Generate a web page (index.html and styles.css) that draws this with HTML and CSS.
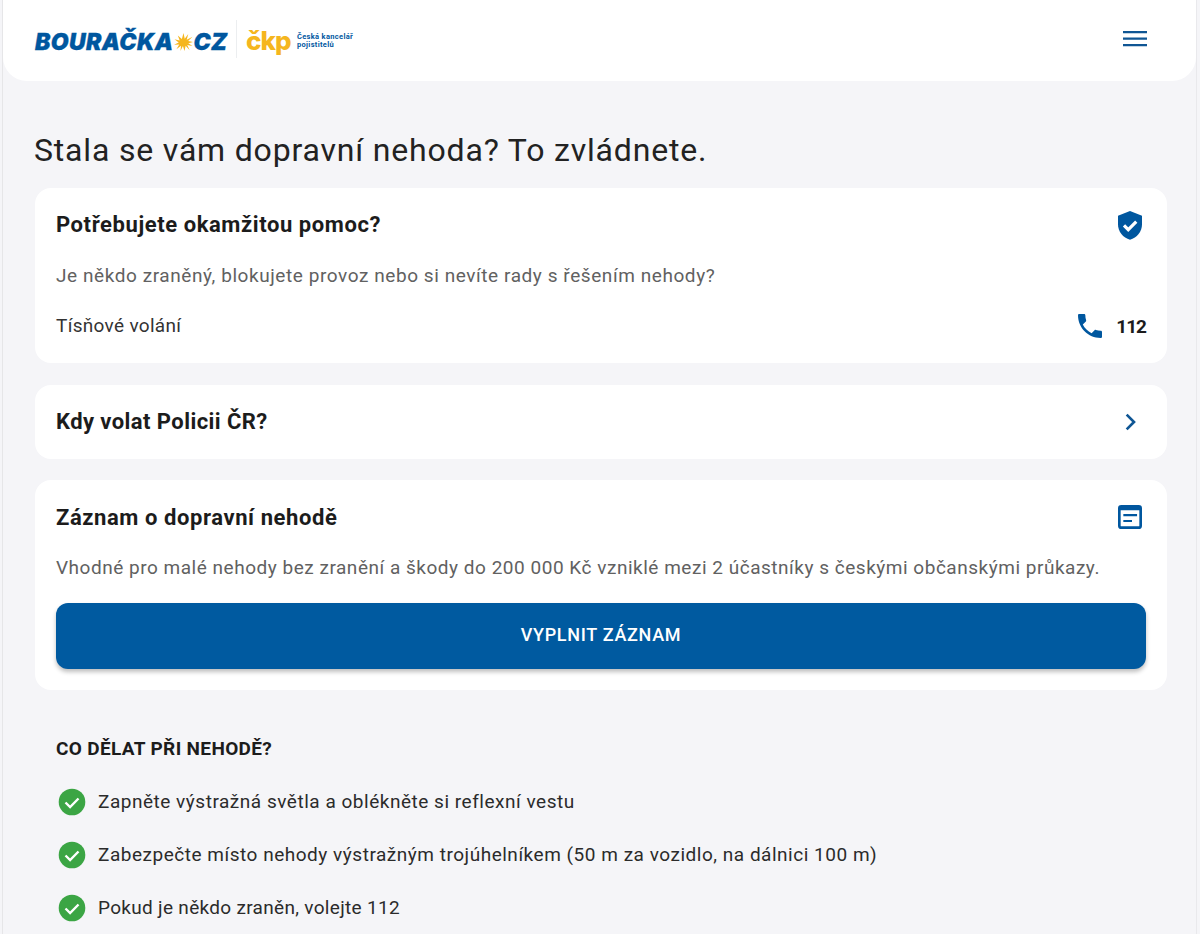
FILE: index.html
```html
<!DOCTYPE html>
<html lang="cs">
<head>
<meta charset="utf-8">
<title>Bouračka.cz</title>
<link rel="stylesheet" href="styles.css">
</head>
<body>
<div class="page">
  <header class="header">
    <div class="logos">
      <div class="logo-main"><span>BOURAČKA</span><svg class="star" viewBox="0 0 20 20"><path fill="#f5b61e" d="M10 0l1.300 6 3.700-5-1.600 6.200L19.500 4l-4.600 4.500 5.100.9-5 1.400 4.500 3-5.600-1.300 2.600 5.600-4.200-4.700L11 19l-1.600-5.300L6.800 19l.6-5.700L2.500 17l3-5L0 12.300l5-2.300L.5 6.500l5.500 1.300L4 2.500l4.300 3.800z"/></svg><span>CZ</span></div>
      <div class="logo-divider"></div>
      <div class="logo-ckp">čkp</div>
      <div class="logo-sub">Česká kancelář<br>pojistitelů</div>
    </div>
    <button class="menu" aria-label="Menu"><svg width="24" height="16" viewBox="0 0 24 16"><path fill="#0f5694" d="M0 0h24v2.200H0zM0 6.500h24v2.200H0zM0 13h24v2.200H0z"/></svg></button>
  </header>
  <main class="main">
    <h1 class="title">Stala se vám dopravní nehoda? To zvládnete.</h1>
    <section class="card card-help">
      <div class="card-head">
        <h2 class="lift">Potřebujete okamžitou pomoc?</h2>
        <svg width="32" height="32" viewBox="0 0 24 24"><path fill="#00579f" d="M12 1.500 3 5v6.500c0 5.400 3.800 10.400 9 11.500 5.200-1.100 9-6.100 9-11.500V5z"/><path fill="none" stroke="#fff" stroke-width="2.400" d="m7.500 12.300 3.200 3.200 6-6"/></svg>
      </div>
      <p class="desc desc-short">Je někdo zraněný, blokujete provoz nebo si nevíte rady s řešením nehody?</p>
      <div class="call-row">
        <span class="call-label">Tísňové volání</span>
        <span class="call-num"><svg width="32" height="32" viewBox="0 0 24 24"><path fill="#00579f" d="M6.600 10.800c1.400 2.800 3.800 5.100 6.600 6.600l2.200-2.200c.3-.3.7-.4 1-.2 1.100.4 2.300.6 3.600.6.600 0 1 .4 1 1V20c0 .6-.4 1-1 1C10.600 21 3 13.400 3 4c0-.6.4-1 1-1h3.500c.6 0 1 .4 1 1 0 1.300.2 2.500.6 3.600.1.300 0 .7-.2 1z"/></svg><b>112</b></span>
      </div>
    </section>
    <section class="card card-police">
      <h2 class="police-title lift">Kdy volat Policii ČR?</h2>
      <svg width="32" height="32" viewBox="0 0 24 24"><path fill="none" stroke="#0f5694" stroke-width="2" d="m9.500 6.500 5.500 5.500-5.500 5.500"/></svg>
    </section>
    <section class="card card-record">
      <div class="card-head">
        <h2>Záznam o dopravní nehodě</h2>
        <svg width="32" height="32" viewBox="0 0 24 24"><rect x="4" y="4" width="16" height="16" rx="1.500" fill="none" stroke="#00579f" stroke-width="2"/><path fill="#00579f" d="M4 4h16v3H4zM7 9.750h10.300v1.600H7zM7 14.200h6.500v1.600H7z"/></svg>
      </div>
      <p class="desc">Vhodné pro malé nehody bez zranění a škody do 200 000 Kč vzniklé mezi 2 účastníky s českými občanskými průkazy.</p>
      <button class="cta">VYPLNIT ZÁZNAM</button>
    </section>
    <section class="todo">
      <h3>CO DĚLAT PŘI NEHODĚ?</h3>
      <ul class="todo-list">
        <li><svg width="32" height="32" viewBox="0 0 32 32"><circle cx="16" cy="16" r="13.300" fill="#3ba544"/><path fill="none" stroke="#fff" stroke-width="2.400" d="m9.500 16.500 4.600 4.500 8.400-8.500"/></svg>Zapněte výstražná světla a oblékněte si reflexní vestu</li>
        <li><svg width="32" height="32" viewBox="0 0 32 32"><circle cx="16" cy="16" r="13.300" fill="#3ba544"/><path fill="none" stroke="#fff" stroke-width="2.400" d="m9.500 16.500 4.600 4.500 8.400-8.500"/></svg>Zabezpečte místo nehody výstražným trojúhelníkem (50 m za vozidlo, na dálnici 100 m)</li>
        <li class="short"><svg width="32" height="32" viewBox="0 0 32 32"><circle cx="16" cy="16" r="13.300" fill="#3ba544"/><path fill="none" stroke="#fff" stroke-width="2.400" d="m9.500 16.500 4.600 4.500 8.400-8.500"/></svg>Pokud je někdo zraněn, volejte 112</li>
      </ul>
    </section>
  </main>
</div>
</body>
</html>
```
FILE: styles.css
```css
* { box-sizing: border-box; }
html, body { margin: 0; height: 100%; overflow: hidden; }
body { background: #f5f5f8; font-family: Roboto, "Liberation Sans", sans-serif; color: #1c1c1c; }
.page { height: 934px; margin: 0 3px 0 2px; border-left: 1px solid #e6e6e8; border-right: 1px solid #e9e9ec; overflow: hidden; }
.header { height: 81px; background: #fff; border-radius: 0 0 24px 24px; display: flex; align-items: center; justify-content: space-between; padding: 0 49px 4px 32px; }
.logos { display: flex; align-items: center; }
.logo-main { display: flex; align-items: center; font-family: Inter, Roboto, sans-serif; font-weight: 900; font-style: italic; font-size: 23px; color: #00579f; letter-spacing: .4px; -webkit-text-stroke: .3px #00579f; width: 191px; margin-top: 7px; }
.star { width: 19px; height: 19px; margin: 0 1px 0 0; flex: none; }
.logo-divider { width: 1px; height: 38px; background: #eceef0; margin: 0 9px 0 10px; }
.logo-ckp { font-family: Inter, Roboto, sans-serif; font-weight: 800; font-size: 26px; line-height: 30px; color: #f5b61e; letter-spacing: -1px; width: 45px; margin-top: 4px; }
.logo-sub { font-size: 7.500px; line-height: 8px; font-weight: 700; color: #00579f; margin: 4px 0 0 6px; letter-spacing: .32px; }
.menu { border: 0; background: none; padding: 0; display: flex; }
.main { padding: 0 29px 0 32px; }
.title { margin: 49px 0 18px -1px; font-size: 32px; line-height: 40px; font-weight: 400; letter-spacing: .82px; color: #222; }
.card { background: #fff; border-radius: 16px; padding: 0 21px; margin-bottom: 22px; }
.card h2 { margin: 0; font-size: 22px; font-weight: 700; letter-spacing: .58px; color: #1c1c1c; }
.card .lift { margin-bottom: 2px; }
.card .police-title { letter-spacing: .43px; }
.card-head { display: flex; justify-content: space-between; align-items: center; padding-top: 21px; height: 53px; }
.card-help { height: 175px; }
.desc { margin: 22px 0 0; font-size: 19px; line-height: 26px; letter-spacing: .52px; color: #616161; }
.desc-short { letter-spacing: .57px; }
.call-row { display: flex; justify-content: space-between; align-items: center; margin-top: 21px; }
.call-label { font-size: 19px; letter-spacing: .31px; color: #333; margin-bottom: 2px; }
.call-num { display: flex; align-items: center; gap: 10px; font-size: 19px; }
.call-num b { letter-spacing: -1px; }
.card-police { height: 74px; margin-bottom: 21px; display: flex; align-items: center; justify-content: space-between; }
.card-record { height: 210px; }
.cta { display: block; width: 100%; height: 66px; margin-top: 22px; padding: 0 0 3px; border: 0; border-radius: 12px; background: #005aa0; color: #fff; font: 500 18px Roboto, sans-serif; letter-spacing: .7px; box-shadow: 0 3px 4px rgba(0,0,0,.25); }
.todo { padding: 0 21px; }
.todo h3 { margin: 47px 0 0; font-size: 19px; line-height: 24px; font-weight: 700; letter-spacing: .35px; color: #1c1c1c; }
.todo-list { list-style: none; margin: 25px 0 0; padding: 0; }
.todo-list li { display: flex; align-items: center; gap: 10px; height: 32px; margin-bottom: 21px; padding-bottom: 2px; font-size: 19px; letter-spacing: .52px; color: #2b2b2b; }
.todo-list svg { margin-top: 2px; }
.todo-list .short { letter-spacing: .31px; }
```
